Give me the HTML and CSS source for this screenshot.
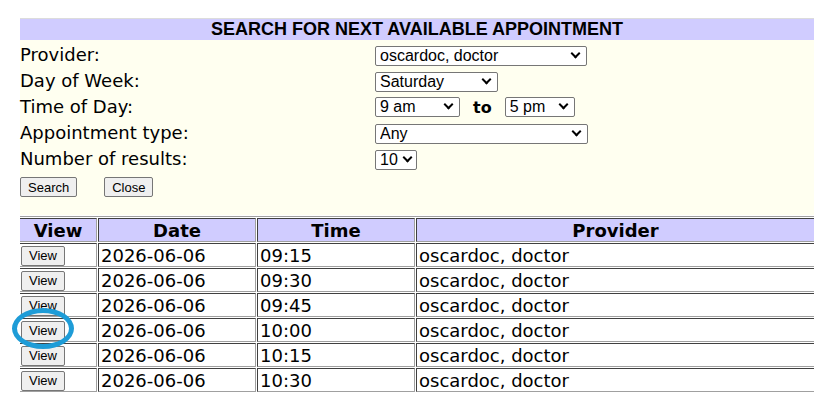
FILE: index.html
```html
<!DOCTYPE html>
<html>
<head>
    <meta charset="UTF-8">
    <title>Search for next available appointment</title>
    <link rel="stylesheet" href="styles.css">
</head>
<body>
<div class="page">
    <div class="title">SEARCH FOR NEXT AVAILABLE APPOINTMENT</div>
    <form class="search">
        <div class="fields">
            <label>Provider:</label>
            <div><span class="sel"><select class="w-provider"><option>oscardoc, doctor</option></select></span></div>

            <label>Day of Week:</label>
            <div>
                <span class="sel">
                    <select class="w-day">
                        <option>Sunday</option><option>Monday</option><option>Tuesday</option><option>Wednesday</option>
                        <option>Thursday</option><option>Friday</option><option selected>Saturday</option>
                    </select>
                </span>
            </div>

            <label>Time of Day:</label>
            <div class="range">
                <span class="sel"><select class="w-from"><option>8 am</option><option selected>9 am</option><option>10 am</option></select></span>
                <b>to</b>
                <span class="sel"><select class="w-to"><option>4 pm</option><option selected>5 pm</option><option>6 pm</option></select></span>
            </div>

            <label>Appointment type:</label>
            <div><span class="sel"><select class="w-type"><option>Any</option></select></span></div>

            <label>Number of results:</label>
            <div><span class="sel sel-small"><select class="w-num"><option>5</option><option selected>10</option><option>20</option></select></span></div>
        </div>
        <div class="actions">
            <button type="button">Search</button>
            <button type="button">Close</button>
        </div>
    </form>

    <div class="results-wrap">
        <table class="results">
            <thead>
            <tr>
                <th class="c-view">View</th>
                <th class="c-date">Date</th>
                <th class="c-time">Time</th>
                <th>Provider</th>
            </tr>
            </thead>
            <tbody>
            <tr><td><button type="button">View</button></td><td>2026-06-06</td><td>09:15</td><td>oscardoc, doctor</td></tr>
            <tr><td><button type="button">View</button></td><td>2026-06-06</td><td>09:30</td><td>oscardoc, doctor</td></tr>
            <tr><td><button type="button">View</button></td><td>2026-06-06</td><td>09:45</td><td>oscardoc, doctor</td></tr>
            <tr><td><button type="button">View</button></td><td>2026-06-06</td><td>10:00</td><td>oscardoc, doctor</td></tr>
            <tr><td><button type="button">View</button></td><td>2026-06-06</td><td>10:15</td><td>oscardoc, doctor</td></tr>
            <tr><td><button type="button">View</button></td><td>2026-06-06</td><td>10:30</td><td>oscardoc, doctor</td></tr>
            </tbody>
        </table>
    </div>
</div>

<!--标注圈-->
<span class="mark"></span>
</body>
</html>
```

FILE: styles.css
```css
html {
    overflow: hidden;
}

body {
    margin: 0;
    font-family: "DejaVu Sans", Verdana, sans-serif;
    font-size: 18px;
    color: #000;
    background: #fff;
}

.page {
    width: 794px;
    padding: 18px 0 0 20px;
}

.title {
    height: 21px;
    line-height: 21px;
    border-top: 1px solid #dcdcdc;
    background: #d0ccff;
    text-align: center;
    font-family: "Liberation Sans", Arial, sans-serif;
    font-size: 18px;
    font-weight: bold;
}

.search {
    padding: 2px 0 18px;
    background: #fffff0;
}

.fields {
    display: grid;
    grid-template-columns: 355px auto;
    grid-auto-rows: 26px;
    align-items: center;
}

.fields label {
    line-height: 26px;
}

.range {
    display: flex;
    align-items: center;
    gap: 13px;
}

.range b {
    font-size: 16px;
    font-weight: bold;
}

/*下拉框:去掉系统样式,箭头用伪元素画*/
.sel {
    position: relative;
    display: inline-block;
    vertical-align: middle;
}

.sel::after {
    content: "";
    position: absolute;
    right: 8px;
    top: 4px;
    width: 5px;
    height: 5px;
    border-right: 2px solid #000;
    border-bottom: 2px solid #000;
    transform: rotate(45deg);
    pointer-events: none;
}

.sel-small::after {
    right: 6px;
}

select {
    display: block;
    height: 20px;
    padding: 0 0 0 4px;
    font-family: "Liberation Sans", Arial, sans-serif;
    font-size: 16px;
    line-height: 18px;
    color: #000;
    background: #fff;
    border: 1px solid #767676;
    border-radius: 2px;
    -webkit-appearance: none;
    appearance: none;
}

.w-provider {
    width: 212px;
}

.w-day {
    width: 123px;
}

.w-from {
    width: 85px;
}

.w-to {
    width: 70px;
}

.w-type {
    width: 213px;
}

.w-num {
    width: 42px;
}

button {
    height: 20px;
    padding: 0 7px;
    font-family: "Liberation Sans", Arial, sans-serif;
    font-size: 13px;
    color: #000;
    background: #efefef;
    border: 1px solid #767676;
    border-radius: 2px;
}

.actions {
    display: flex;
    gap: 27px;
    margin-top: 5px;
}

.results-wrap {
    overflow: hidden;
    padding-top: 1px;
}

.results {
    width: 800px;
    margin-left: -3px;
    table-layout: fixed;
    border-collapse: separate;
    border-spacing: 1px;
    border: 1px solid;
    border-color: #a0a0a0 #404040 #404040 #a0a0a0;
}

.results th,
.results td {
    box-sizing: border-box;
    height: 24px;
    padding: 2px 2px 0;
    line-height: 20px;
    border: 1px solid;
    border-color: #404040 #a0a0a0 #a0a0a0 #404040;
    text-align: left;
    white-space: nowrap;
}

.results th {
    background: #d0ccff;
    font-weight: bold;
    text-align: center;
}

.results td:first-child {
    padding: 0 0 0 1px;
}

.results td button {
    vertical-align: middle;
}

.results .c-view {
    width: 78px;
}

.results .c-date {
    width: 158px;
}

.results .c-time {
    width: 158px;
}

.mark {
    position: absolute;
    left: 12px;
    top: 308px;
    width: 52px;
    height: 31px;
    border: 5px solid #1e9cd7;
    border-radius: 50%;
}
```
